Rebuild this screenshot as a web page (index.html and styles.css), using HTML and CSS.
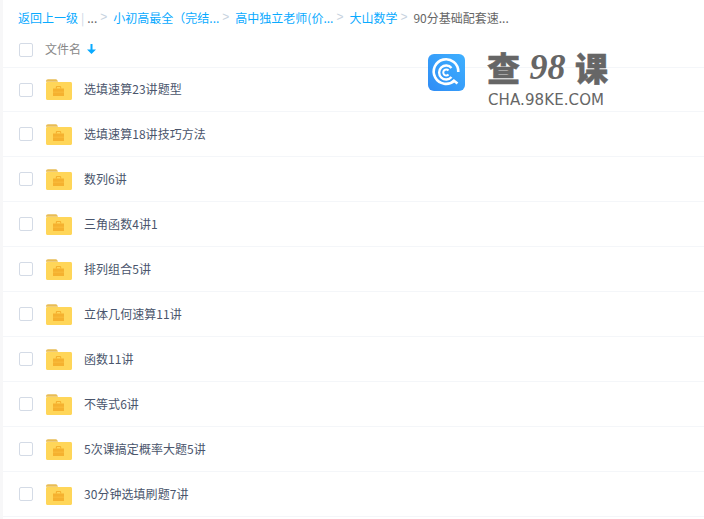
FILE: index.html
```html
<!DOCTYPE html>
<html lang="zh-CN">
<head>
<meta charset="utf-8">
<title>文件列表</title>
<link rel="stylesheet" href="styles.css">
</head>
<body>
<svg class="defs" width="0" height="0" aria-hidden="true">
  <symbol id="folder" viewBox="0 0 26 21">
    <path d="M0 2.500C0 1 .8.3 2 .3h7.500c1 0 1.800.6 2.200 1.700l.3.8H0z" fill="#e9bd55"/>
    <path d="M0 4.500C0 3.400.7 3 1.500 3h23c.9 0 1.500.6 1.500 1.500v15c0 .9-.6 1.500-1.500 1.500h-23C.6 21 0 20.400 0 19.500z" fill="#ffd659"/>
    <path d="M7 9.500h11v7.500H7z" fill="#f5b12f"/>
    <path d="M9.800 9.500V8.300C9.800 7.500 10.300 7 11.100 7h2.800c.8 0 1.300.5 1.300 1.300v1.200h-1.100V8.100h-3.100v1.400z" fill="#f5b12f"/>
    <path d="M7 12.800h11v.6H7z" fill="#fbc647"/>
  </symbol>
</svg>
<main class="page">
  <nav class="crumbs">
    <a class="link">返回上一级</a><span class="bar">|</span><span class="dots">...</span>
    <span class="sep">&gt;</span><a class="link">小初高最全（完结...</a>
    <span class="sep">&gt;</span><a class="link">高中独立老师(价...</a>
    <span class="sep">&gt;</span><a class="link">大山数学</a>
    <span class="sep">&gt;</span><span class="current">90分基础配套速...</span>
  </nav>
  <div class="head">
    <span class="check"></span>
    <span class="head-name">文件名</span>
    <svg class="arrow" width="9" height="10" viewBox="0 0 9 10"><path d="M3.500 0h2v5.500H9L4.500 10 0 5.500h3.500z" fill="#09aaff"/></svg>
  </div>
  <ul class="list">
    <li class="row"><span class="check"></span><svg class="folder"><use href="#folder"/></svg><span class="name">选填速算23讲题型</span></li>
    <li class="row"><span class="check"></span><svg class="folder"><use href="#folder"/></svg><span class="name">选填速算18讲技巧方法</span></li>
    <li class="row"><span class="check"></span><svg class="folder"><use href="#folder"/></svg><span class="name">数列6讲</span></li>
    <li class="row"><span class="check"></span><svg class="folder"><use href="#folder"/></svg><span class="name">三角函数4讲1</span></li>
    <li class="row"><span class="check"></span><svg class="folder"><use href="#folder"/></svg><span class="name">排列组合5讲</span></li>
    <li class="row"><span class="check"></span><svg class="folder"><use href="#folder"/></svg><span class="name">立体几何速算11讲</span></li>
    <li class="row"><span class="check"></span><svg class="folder"><use href="#folder"/></svg><span class="name">函数11讲</span></li>
    <li class="row"><span class="check"></span><svg class="folder"><use href="#folder"/></svg><span class="name">不等式6讲</span></li>
    <li class="row"><span class="check"></span><svg class="folder"><use href="#folder"/></svg><span class="name">5次课搞定概率大题5讲</span></li>
    <li class="row"><span class="check"></span><svg class="folder"><use href="#folder"/></svg><span class="name">30分钟选填刷题7讲</span></li>
  </ul>
  <div class="brand">
    <svg class="brand-icon" width="37" height="37" viewBox="0 0 37 37">
      <defs><linearGradient id="bg" x1="0" y1="1" x2="1" y2="0"><stop offset="0" stop-color="#2f8cf5"/><stop offset="1" stop-color="#3fb0ff"/></linearGradient></defs>
      <rect width="37" height="37" rx="6" fill="url(#bg)"/>
      <path d="M26.500 26.500A12.300 12.300 0 1 1 30.300 18" fill="none" stroke="#fff" stroke-width="2.600"/>
      <path d="M23.500 14A7 7 0 1 0 23.500 23" fill="none" stroke="#fff" stroke-width="2.400"/>
      <path d="M20.500 16.500A3 3 0 1 0 20.500 20.500" fill="none" stroke="#fff" stroke-width="2"/>
      <path d="M25 26l4.500 3.500" stroke="#fff" stroke-width="2.600"/>
    </svg>
    <div class="brand-text">
      <div class="brand-cn"><span>查</span><span class="brand-num">98</span><span>课</span></div>
      <div class="brand-en">CHA.98KE.COM</div>
    </div>
  </div>
</main>
</body>
</html>
```
FILE: styles.css
```css
* { box-sizing: border-box; }
html, body { margin: 0; padding: 0; }
body { width: 704px; height: 519px; overflow: hidden; background: #f7f7f8; font-family: "Noto Sans CJK SC", "Liberation Sans", sans-serif; font-size: 12px; }
.defs { position: absolute; }
.page { position: relative; height: 519px; margin-left: 3px; background: #fff; }
.crumbs { height: 34px; padding-left: 15px; margin-bottom: 1px; display: flex; align-items: center; white-space: nowrap; line-height: 17px; color: #666; }
.link { color: #09aaff; }
.bar { color: #c8d6e6; margin: 0 3px; }
.dots { color: #666; }
.sep { color: #c6d2de; margin: 0 6px 0 3px; font-family: "Liberation Sans", sans-serif; font-size: 12px; }
.current { color: #666; }
.head { height: 33px; padding: 0 0 2px 16px; border-bottom: 1px solid #f4f6f9; display: flex; align-items: center; color: #888; }
.check { width: 14px; height: 14px; flex: none; border: 1px solid #d4dbe6; border-radius: 2px; background: #fff; }
.head-name { margin: 0 0 4px 12px; }
.arrow { margin: 0 0 2px 6px; }
.list { list-style: none; margin: 0; padding: 0; }
.row { height: 45px; border-bottom: 1px solid #f4f6f9; display: flex; align-items: center; padding-left: 16px; color: #4a556c; }
.row:first-child { height: 44px; }
.folder { width: 26px; height: 21px; margin-left: 13px; flex: none; }
.name { margin: 0 0 2px 12px; letter-spacing: .05px; }
.brand { position: absolute; left: 425px; top: 48px; display: flex; gap: 22px; align-items: flex-start; }
.brand-icon { margin-top: 6px; }
.brand-text { width: 122px; color: #666; }
.brand-cn { display: flex; align-items: center; height: 38px; font-weight: 900; font-size: 33px; line-height: 38px; -webkit-text-stroke: .5px #666; }
.brand-num { width: 55px; text-align: center; font-family: "Liberation Serif", serif; font-style: italic; font-weight: 700; font-size: 36px; -webkit-text-stroke: 0; }
.brand-en { font-family: "DejaVu Sans", sans-serif; font-size: 15px; line-height: 16px; letter-spacing: .1px; white-space: nowrap; margin: 6px 0 0 1px; }
```
